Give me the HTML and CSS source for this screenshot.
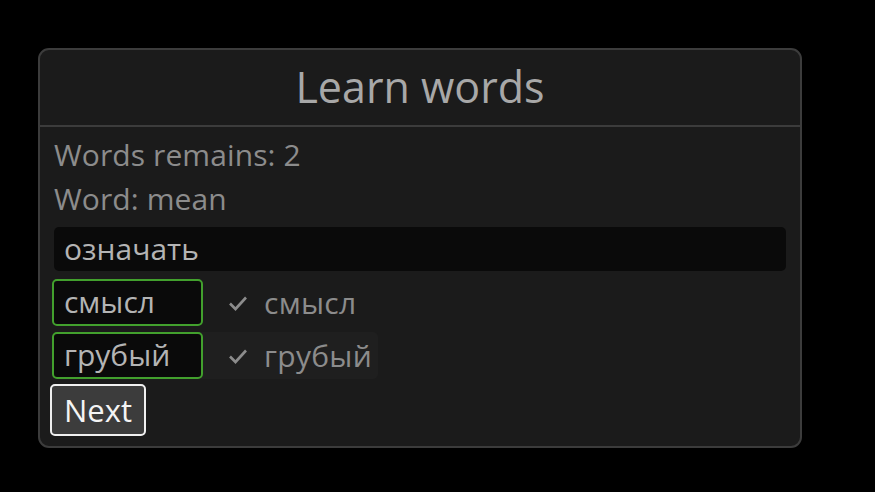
FILE: index.html
```html
<!DOCTYPE html>
<html>
<head>
<meta charset="utf-8">
<link rel="stylesheet" href="styles.css">
</head>
<body>
<div class="window">
  <div class="header"><span class="title">Learn words</span></div>
  <div class="content">
    <div class="label">Words remains: 2</div>
    <div class="label">Word: mean</div>
    <div class="field">означать</div>
    <div class="row">
      <div class="answer">смысл</div>
      <div class="result"><svg class="check" viewBox="0 0 20 16" width="20" height="16"><path d="M2 8.5 L7.5 14 L18 2.5" fill="none" stroke="#8c8c8c" stroke-width="2.6"/></svg><span>смысл</span></div>
    </div>
    <div class="row hover">
      <div class="answer">грубый</div>
      <div class="result"><svg class="check" viewBox="0 0 20 16" width="20" height="16"><path d="M2 8.5 L7.5 14 L18 2.5" fill="none" stroke="#8c8c8c" stroke-width="2.6"/></svg><span>грубый</span></div>
    </div>
    <button class="next">Next</button>
  </div>
</div>
</body>
</html>
```
FILE: styles.css
```css
html, body {
  margin: 0;
  background: #000;
}
body {
  padding: 48px 0 0 38px;
  font-family: "Open Sans", "Noto Sans", sans-serif;
}
.window {
  box-sizing: border-box;
  width: 764px;
  height: 400px;
  border: 2px solid #3c3c3c;
  border-radius: 11px;
  background: #1b1b1b;
  display: flex;
  flex-direction: column;
}
.header {
  height: 75px;
  border-bottom: 2px solid #3c3c3c;
  display: flex;
  align-items: center;
  justify-content: center;
}
.title {
  font-size: 43px;
  font-weight: 400;
  color: #a8a8a8;
  line-height: 1;
  padding-bottom: 2px;
}
.content {
  padding: 6px 14px 0 12px;
  display: flex;
  flex-direction: column;
  align-items: flex-start;
}
.label {
  font-size: 30px;
  font-weight: 400;
  color: #8c8c8c;
  line-height: 44px;
  margin-left: 2px;
  letter-spacing: 0.1px;
}
.field {
  box-sizing: border-box;
  align-self: stretch;
  margin: 6px 0 0 2px;
  height: 44px;
  background: #0a0a0a;
  border-radius: 5px;
  padding-left: 10px;
  font-size: 30px;
  font-weight: 400;
  color: #b4b4b4;
  line-height: 43px;
}
.row {
  display: flex;
  align-items: center;
  margin-top: 8px;
  border-radius: 5px;
  padding-right: 6px;
}
.row + .row {
  margin-top: 6px;
}
.row.hover {
  background: #1f1f1f;
}
.answer {
  box-sizing: border-box;
  width: 151px;
  height: 47px;
  border: 2px solid #42a02d;
  border-radius: 5px;
  background: #0a0a0a;
  padding-left: 10px;
  font-size: 30px;
  font-weight: 400;
  color: #b4b4b4;
  line-height: 42px;
}
.result {
  display: flex;
  align-items: center;
  margin-left: 25px;
  font-size: 30px;
  font-weight: 400;
  color: #8c8c8c;
  letter-spacing: 0.3px;
}
.check {
  margin-right: 16px;
}
.next {
  box-sizing: border-box;
  margin: 5px 0 0 -2px;
  width: 96px;
  height: 52px;
  border: 2px solid #f0f0f0;
  border-radius: 5px;
  background: #3c3c3c;
  color: #f4f4f4;
  font-family: "Open Sans", "Noto Sans", sans-serif;
  font-size: 31px;
  font-weight: 400;
  padding: 0 0 0 12px;
  text-align: left;
  line-height: 46px;
}
```
